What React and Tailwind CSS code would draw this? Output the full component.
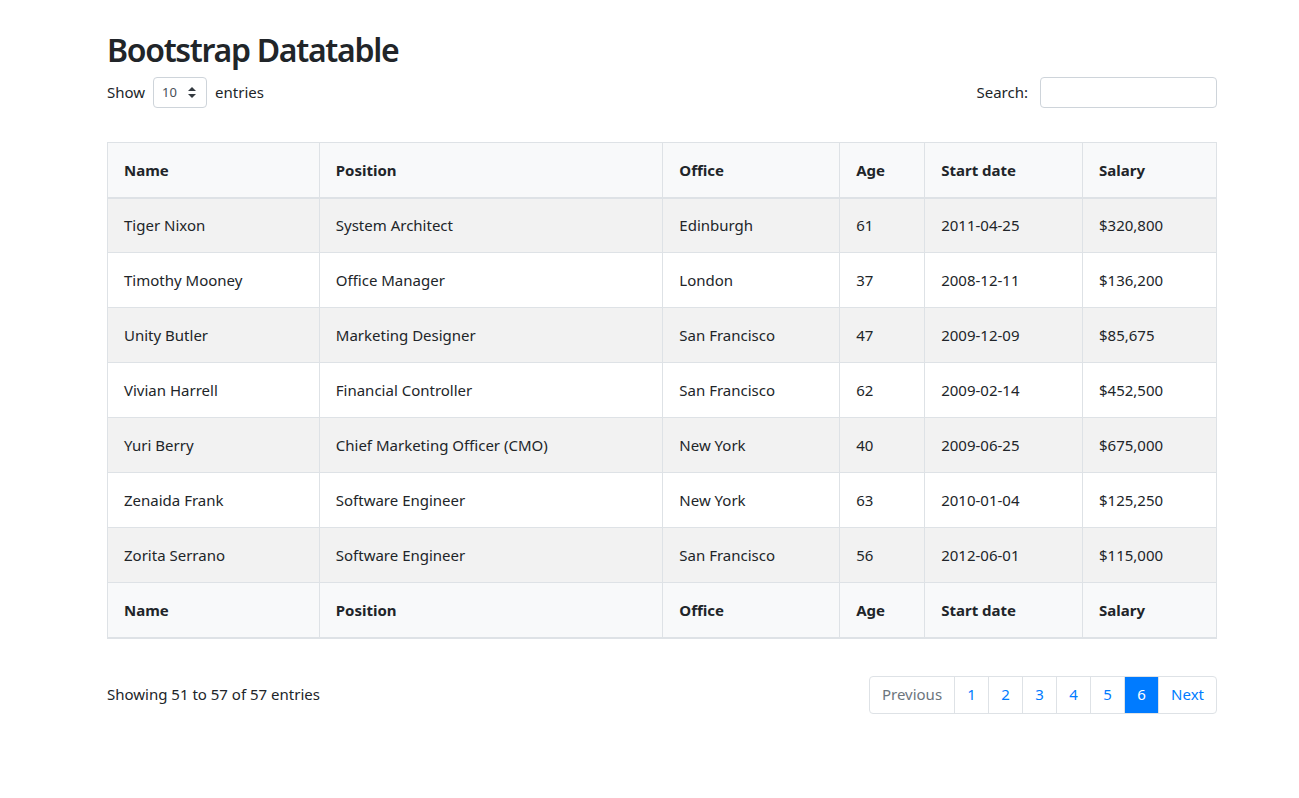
import React from 'react'

const ROWS = [
  ['Tiger Nixon', 'System Architect', 'Edinburgh', '61', '2011-04-25', '$320,800'],
  ['Timothy Mooney', 'Office Manager', 'London', '37', '2008-12-11', '$136,200'],
  ['Unity Butler', 'Marketing Designer', 'San Francisco', '47', '2009-12-09', '$85,675'],
  ['Vivian Harrell', 'Financial Controller', 'San Francisco', '62', '2009-02-14', '$452,500'],
  ['Yuri Berry', 'Chief Marketing Officer (CMO)', 'New York', '40', '2009-06-25', '$675,000'],
  ['Zenaida Frank', 'Software Engineer', 'New York', '63', '2010-01-04', '$125,250'],
  ['Zorita Serrano', 'Software Engineer', 'San Francisco', '56', '2012-06-01', '$115,000'],
]

const HEADS = ['Name', 'Position', 'Office', 'Age', 'Start date', 'Salary']
const WIDTHS = ['w-[212px]', 'w-[344px]', 'w-[177px]', 'w-[85px]', 'w-[158px]', 'w-[134px]']

function HeadRow() {
  return (
    <tr className="bg-[#f8f9fa]">
      {HEADS.map((h, i) => (
        <th key={h} className={`${WIDTHS[i]} text-left font-bold px-4 h-[55px] border border-b-2 border-[#dee2e6]`}>
          {h}
        </th>
      ))}
    </tr>
  )
}

const PAGES = ['1', '2', '3', '4', '5', '6']

export default function App() {
  return (
    <div className="min-h-screen bg-white text-[#212529] text-base" style={{ fontFamily: '"Noto Sans", "Open Sans", sans-serif' }}>
      <div className="w-[1110px] ml-[107px] pt-[31px]">
        <h1 className="text-[32px] leading-[38px] font-semibold mb-2 tracking-[-1.3px]">Bootstrap Datatable</h1>

        <div className="flex items-center justify-between text-[15px]">
          <div className="flex items-center gap-2">
            <span>Show</span>
            <div className="w-[54px] h-[31px] border border-[#ced4da] rounded flex items-center justify-between pl-2 pr-[10px] text-[13px] text-[#495057]">
              <span>10</span>
              <svg width="8" height="11" viewBox="0 0 8 11" fill="#343a40">
                <path d="M4 0 L8 4 L0 4 Z" />
                <path d="M0 7 L8 7 L4 11 Z" />
              </svg>
            </div>
            <span>entries</span>
          </div>
          <div className="flex items-center gap-3">
            <span>Search:</span>
            <input className="w-[177px] h-[31px] border border-[#ced4da] rounded outline-none px-2" />
          </div>
        </div>

        <table className="w-full mt-[34px] border-collapse border border-[#dee2e6] text-[15px]">
          <thead>
            <HeadRow />
          </thead>
          <tbody>
            {ROWS.map((r, i) => (
              <tr key={r[0]} className={i % 2 === 0 ? 'bg-[#f2f2f2]' : 'bg-white'}>
                {r.map((c, j) => (
                  <td key={j} className="px-4 h-[55px] border border-[#dee2e6]">{c}</td>
                ))}
              </tr>
            ))}
          </tbody>
          <tfoot>
            <HeadRow />
          </tfoot>
        </table>

        <div className="flex items-center justify-between mt-[37px] text-[15px]">
          <div>Showing 51 to 57 of 57 entries</div>
          <div className="flex h-[38px] border border-[#dee2e6] rounded">
            <span className="px-3 flex items-center text-[#6c757d]">Previous</span>
            {PAGES.map(p => (
              <span
                key={p}
                className={`w-[34px] flex items-center justify-center border-l border-[#dee2e6] ${p === '6' ? 'bg-[#007bff] text-white border-[#007bff]' : 'text-[#007bff]'}`}
              >
                {p}
              </span>
            ))}
            <span className="px-3 flex items-center text-[#007bff] border-l border-[#dee2e6]">Next</span>
          </div>
        </div>
      </div>
    </div>
  )
}
